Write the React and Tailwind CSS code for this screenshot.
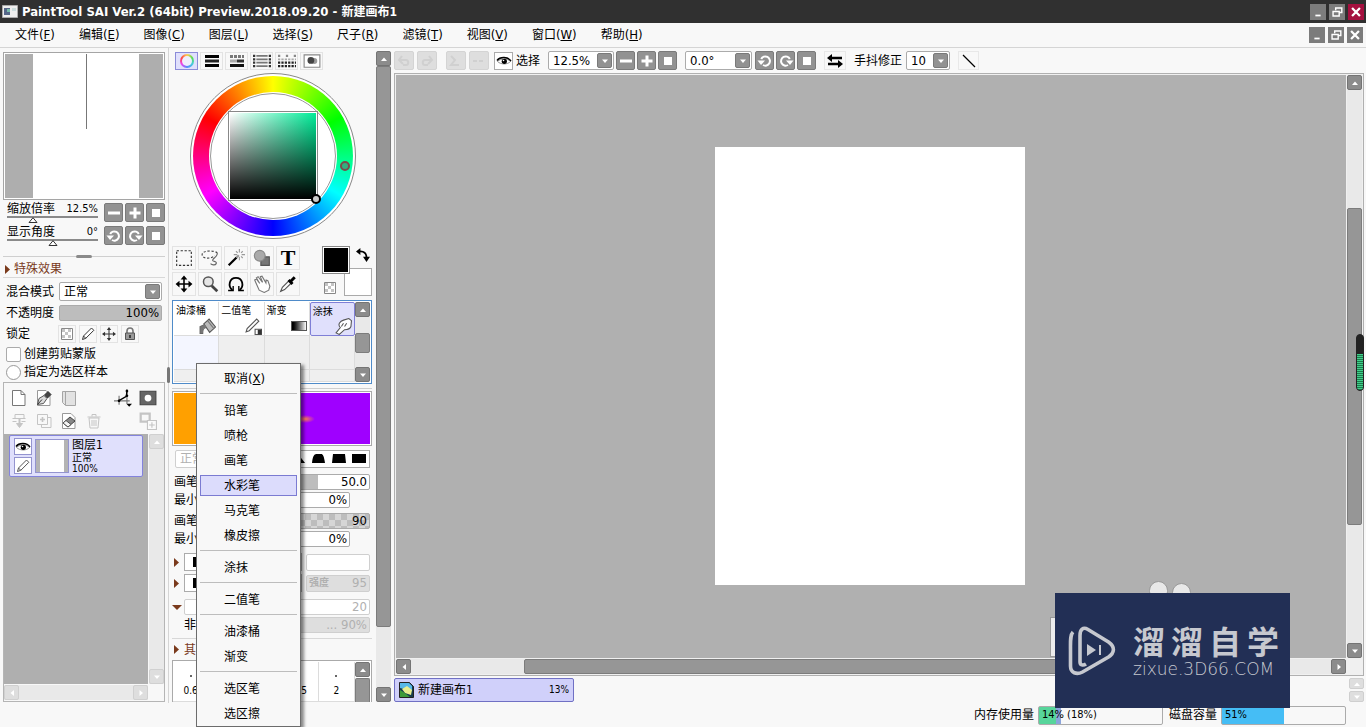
import { useState } from "react";
import clsx from "clsx";

const menus = [
  ["文件", "F"], ["编辑", "E"], ["图像", "C"], ["图层", "L"], ["选择", "S"],
  ["尺子", "R"], ["滤镜", "T"], ["视图", "V"], ["窗口", "W"], ["帮助", "H"],
];

const toolMenu = [
  ["取消"],
  ["铅笔", "喷枪", "画笔", "水彩笔", "马克笔", "橡皮擦"],
  ["涂抹"],
  ["二值笔"],
  ["油漆桶", "渐变"],
  ["选区笔", "选区擦"],
];

/* ---------- icons ---------- */

function Svg({ size = 16, children, className }) {
  return (
    <svg
      width={size}
      height={size}
      viewBox="0 0 16 16"
      fill="none"
      stroke="currentColor"
      strokeWidth="1"
      className={clsx("shrink-0", className)}
      aria-hidden="true"
    >
      {children}
    </svg>
  );
}

const Minus = () => <Svg><path d="M2 8h12" strokeWidth="3" /></Svg>;
const Plus = () => <Svg><path d="M2.500 8h11M8 2.500v11" strokeWidth="3" /></Svg>;
const Stop = () => <Svg><path d="M4 4h8v8h-8z" fill="currentColor" stroke="none" /></Svg>;
const RotateLeft = () => (
  <Svg>
    <path d="M4.200 6A4.600 4.600 0 1 1 6 12" strokeWidth="2" />
    <path d="M0.500 7.500h7.500L4 12z" fill="currentColor" stroke="none" />
  </Svg>
);
const RotateRight = () => <span className="-scale-x-100"><RotateLeft /></span>;
const Eye = () => (
  <Svg>
    <path d="M1.500 8.500C4 5.500 11.500 5 14.500 8.500 11.500 11.800 5 11.800 1.500 8.500z" fill="#fff" stroke="#777" strokeWidth="0.800" />
    <path d="M1 7.500C4 3.500 12 3.500 15 8" strokeWidth="1.400" />
    <circle cx="8.300" cy="8.300" r="2.600" fill="currentColor" stroke="none" />
    <circle cx="7.500" cy="7.500" r="0.800" fill="#fff" stroke="none" />
  </Svg>
);
const Pencil = () => (
  <Svg>
    <path d="M2.500 13.500l1-3.500 8-8 2.300 2.300-8 8zM3.500 10l2.300 2.300" fill="#fff" />
  </Svg>
);
const Checker = () => (
  <Svg>
    <path d="M2.500 2.500h11v11h-11z" fill="#fff" stroke="#888" />
    <path d="M3 3h3v3h-3zM9 3h3v3h-3zM6 6h3v3h-3zM3 9h3v3h-3zM9 9h3v3h-3z" fill="#c4c4c4" stroke="none" />
  </Svg>
);
const Move = () => (
  <Svg size={14}>
    <path d="M8 2v12M2 8h12" strokeWidth="1.200" />
    <path d="M8 0L5.500 3.500h5zM8 16l-2.500-3.500h5zM0 8l3.500-2.500v5zM16 8l-3.500-2.500v5z" fill="currentColor" stroke="none" />
  </Svg>
);
const Lock = () => (
  <Svg>
    <path d="M5 7V5a3 3 0 0 1 6 0v2" strokeWidth="1.600" stroke="#777" />
    <path d="M3.500 7h9v6.500h-9z" fill="#999" stroke="#555" />
    <path d="M8 9v3" stroke="#222" strokeWidth="1.500" />
  </Svg>
);
const MinIcon = () => <Svg size={14}><path d="M5 12h6" strokeWidth="2" /></Svg>;
const RestoreIcon = () => (
  <Svg size={14}>
    <path d="M6.500 6V3.500h7v5H11M3.500 7.500h7v5h-7z" strokeWidth="1.600" />
  </Svg>
);
const CloseIcon = () => <Svg size={14}><path d="M3.500 3.500l9 9M12.500 3.500l-9 9" strokeWidth="2.600" /></Svg>;

function Triangle({ dir }) {
  const d = {
    up: "M1 6l3-3.500L7 6z",
    down: "M1 2.500h6L4 6z",
    left: "M6 1v6L2.500 4z",
    right: "M2.500 1v6L6 4z",
  }[dir];
  return (
    <svg width="8" height="8" viewBox="0 0 8 8" className="shrink-0" aria-hidden="true">
      <path d={d} fill="currentColor" />
    </svg>
  );
}

function Expander({ open }) {
  return (
    <svg width="11" height="9" viewBox="0 0 11 9" className="shrink-0 text-[#7a3a1c]" aria-hidden="true">
      <path d={open ? "M0 2h10L5 7z" : "M2 0v9l5-4.500z"} fill="currentColor" />
    </svg>
  );
}

/* ---------- small controls ---------- */

function WindowButton({ label, close, children }) {
  return (
    <button
      aria-label={label}
      className={clsx(
        "flex h-4 w-4 items-center justify-center text-white",
        close ? "bg-[#a5103f]" : "bg-[#7c7c7c]"
      )}
    >
      {children}
    </button>
  );
}

function DarkButton({ label, children }) {
  return (
    <button
      aria-label={label}
      className="flex h-[19px] w-[19px] items-center justify-center rounded-xs border border-[#7a7a7a] bg-[#929292] text-white"
    >
      {children}
    </button>
  );
}

function GhostButton({ label, children }) {
  return (
    <button
      aria-label={label}
      className="flex h-[19px] w-5 items-center justify-center rounded-xs border border-[#d4d4d4] bg-[#dedede] text-[#d0d0d0]"
    >
      {children}
    </button>
  );
}

function IconButton({ label, muted, children }) {
  return (
    <button
      aria-label={label}
      className={clsx("flex h-[18px] w-[18px] items-center justify-center", muted ? "text-[#c4c4c4]" : "text-[#333]")}
    >
      {children}
    </button>
  );
}

function Select({ label, value, className }) {
  return (
    <div className={clsx("relative h-[19px]", className)}>
      <select
        aria-label={label}
        defaultValue={value}
        className="h-full w-full appearance-none rounded-xs border border-[#ababab] bg-white pl-1 leading-4"
      >
        <option>{value}</option>
      </select>
      <span className="pointer-events-none absolute top-0.5 right-0.5 flex h-[15px] w-[15px] items-center justify-center rounded-xs border border-[#7a7a7a] bg-[#929292] text-white">
        <Triangle dir="down" />
      </span>
    </div>
  );
}

function ScrollButton({ dir, light }) {
  return (
    <button
      aria-label={dir}
      className={clsx(
        "flex h-[15px] w-[15px] shrink-0 items-center justify-center rounded-xs border text-white",
        light ? "border-[#d0d0d0] bg-[#dedede]" : "border-[#747474] bg-[#8c8c8c]"
      )}
    >
      <Triangle dir={dir} />
    </button>
  );
}

// before / thumb / after are relative lengths of the track
function Scrollbar({ horizontal, light, before = 0, thumb = 0, after = 0, className }) {
  return (
    <div className={clsx("flex shrink-0 bg-[#e9e9e9]", horizontal ? "h-[15px]" : "w-[15px] flex-col", className)}>
      <ScrollButton dir={horizontal ? "left" : "up"} light={light} />
      <div className={clsx("flex min-h-0 flex-1", !horizontal && "flex-col")}>
        <div style={{ flexGrow: before }} />
        {thumb > 0 && (
          <div className="rounded-xs border border-[#7c7c7c] bg-[#969696]" style={{ flexGrow: thumb }} />
        )}
        <div style={{ flexGrow: after }} />
      </div>
      <ScrollButton dir={horizontal ? "right" : "down"} light={light} />
    </div>
  );
}

function ViewSlider({ id, label, text, initial }) {
  const [value, setValue] = useState(initial);
  return (
    <div className="relative h-[21px] w-[91px]">
      <div className="flex justify-between border-b-2 border-[#8a8a8a] leading-[14px]">
        <label htmlFor={id}>{label}</label>
        <span className="text-[11px]">{text}</span>
      </div>
      <svg
        width="11"
        height="6"
        viewBox="0 0 11 6"
        className="absolute bottom-0 -translate-x-1/2"
        style={{ left: `${value}%` }}
        aria-hidden="true"
      >
        <path d="M5.500 0.700L9.500 5.500h-8z" fill="#fff" stroke="#333" />
      </svg>
      <input
        id={id}
        type="range"
        value={value}
        onChange={(e) => setValue(e.target.value)}
        className="absolute inset-0 h-full w-full opacity-0"
      />
    </div>
  );
}

/* ---------- left column ---------- */

function NavigatorPanel() {
  return (
    <>
      <div className="flex h-[148px] shrink-0 justify-center border border-[#a5a5a5] bg-white p-px">
        <div className="flex w-full justify-center bg-[#aeaeae] pl-1">
          <div className="flex w-[106px] justify-center bg-white">
            <div className="h-[75px] w-px bg-[#777]" />
          </div>
        </div>
      </div>
      <div className="mt-px flex h-[23px] shrink-0 items-center justify-between pl-1">
        <ViewSlider id="zoom" label="缩放倍率" text="12.5%" initial={29} />
        <div className="flex gap-0.5">
          <DarkButton label="缩小"><Minus /></DarkButton>
          <DarkButton label="放大"><Plus /></DarkButton>
          <DarkButton label="重置缩放"><Stop /></DarkButton>
        </div>
      </div>
      <div className="flex h-[23px] shrink-0 items-center justify-between pl-1">
        <ViewSlider id="angle" label="显示角度" text="0°" initial={50} />
        <div className="flex gap-0.5">
          <DarkButton label="向左旋转"><RotateLeft /></DarkButton>
          <DarkButton label="向右旋转"><RotateRight /></DarkButton>
          <DarkButton label="重置角度"><Stop /></DarkButton>
        </div>
      </div>
      <div className="mt-1 flex h-2.5 shrink-0 items-center">
        <div className="h-px flex-1 bg-[#cfcfcf]" />
        <div className="h-[3px] w-4 rounded-full bg-[#8a8a8a]" />
        <div className="h-px flex-1 bg-[#cfcfcf]" />
      </div>
    </>
  );
}

function LayerSettings() {
  return (
    <>
      <button className="flex h-[17px] shrink-0 items-center border-b border-[#d8d8d8] text-[#7a3a1c]">
        <Expander />
        特殊效果
      </button>
      <div className="mt-1 flex h-[19px] shrink-0 items-center justify-between px-[3px]">
        <span>混合模式</span>
        <Select label="混合模式" value="正常" className="w-[103px]" />
      </div>
      <div className="mt-1 flex h-4 shrink-0 items-center justify-between px-[3px]">
        <label htmlFor="opacity">不透明度</label>
        <input
          id="opacity"
          defaultValue="100%"
          className="h-4 w-[103px] rounded-xs border border-[#ababab] bg-[#bdbdbd] pr-0.5 text-right text-[13px]"
        />
      </div>
      <div className="mt-1 flex h-[18px] shrink-0 items-center px-[3px]">
        <span className="w-[52px]">锁定</span>
        <div className="flex gap-[3px] text-[#333]">
          {[["锁定透明", Checker], ["锁定绘画", Pencil], ["锁定移动", Move], ["全部锁定", Lock]].map(([label, Icon]) => (
            <button
              key={label}
              aria-label={label}
              className="flex h-[18px] w-[18px] items-center justify-center border border-[#e3e3e3]"
            >
              <Icon />
            </button>
          ))}
        </div>
      </div>
      <label className="mt-0.5 flex h-[18px] shrink-0 items-center gap-[3px] pl-[3px]">
        <input type="checkbox" className="h-[15px] w-[15px] appearance-none rounded-xs border border-[#ababab] bg-white" />
        创建剪贴蒙版
      </label>
      <label className="flex h-[18px] shrink-0 items-center gap-[3px] pl-[3px]">
        <input type="radio" name="sample" className="h-[15px] w-[15px] appearance-none rounded-full border border-[#999] bg-white" />
        指定为选区样本
      </label>
    </>
  );
}

const Page = ({ fill = "#fff" }) => <path d="M1.500 0.500H10l4 4v11H1.500z" fill={fill} />;

function LayerPanel() {
  return (
    <section className="mt-px flex min-h-0 flex-1 flex-col border border-[#b5b5b5]">
      <div className="shrink-0 pt-[3px] pb-0.5">
        <div className="flex h-[23px] items-center gap-[7px] pr-[7px] pl-1.5">
          <IconButton label="新建图层"><Svg className="text-[#777]"><Page /><path d="M10 0.500v4h4" /></Svg></IconButton>
          <IconButton label="新建钢笔图层">
            <Svg>
              <g stroke="#999"><Page /></g>
              <path d="M1.500 14.500l1.500-6 5-3 3 3-3.500 5z" fill="#ddd" stroke="#555" />
              <path d="M8.500 5l3.500-3.500 3 3L11.500 8z" fill="#444" />
              <path d="M1.500 14.500l4.500-5" />
            </Svg>
          </IconButton>
          <IconButton label="新建图层组">
            <Svg className="text-[#a5a5a5]"><path d="M1.500 1.500h13v14h-10l-3-3z" fill="#e2e2e2" /><path d="M4.500 15V2" /></Svg>
          </IconButton>
          <span className="flex-1" />
          <IconButton label="透视尺">
            <Svg size={18} className="text-black">
              <path d="M0 10.500h14M11.500 0v13M4.500 6v8" stroke="#777" />
              <path d="M4 10.500l7-4 .500-5" strokeWidth="1.200" />
              <circle cx="4.500" cy="10.500" r="1.200" fill="currentColor" stroke="none" />
              <circle cx="11.500" cy="6" r="1.200" fill="currentColor" stroke="none" />
              <circle cx="11.500" cy="1.800" r="1.200" fill="currentColor" stroke="none" />
              <path d="M11 13h5l-2.500 2.800z" fill="currentColor" stroke="none" />
            </Svg>
          </IconButton>
          <IconButton label="图层蒙版">
            <Svg size={18}><path d="M1 2h14v12H1z" fill="#666" stroke="#444" /><circle cx="8" cy="8" r="3" fill="#fff" stroke="none" /></Svg>
          </IconButton>
        </div>
        <div className="flex h-[23px] items-center gap-[7px] pr-[7px] pl-1.5">
          <IconButton label="向下合并" muted>
            <Svg><path d="M4 1.500h9v4H4zM1.500 5.500H6M10 5.500h4.500M1.500 8.500h4M10.500 8.500h4" /><path d="M8.500 5v6" strokeWidth="2" /><path d="M5.500 10.500h6l-3 4z" fill="currentColor" /></Svg>
          </IconButton>
          <IconButton label="复制图层" muted>
            <Svg><path d="M1.500 1.500h10v10h-10zM12 4.500h3v10H5.500V12" /><path d="M4 6.500h5M6.500 4v5" strokeWidth="1.600" /></Svg>
          </IconButton>
          <IconButton label="清除图层">
            <Svg><g stroke="#999"><Page /></g><path d="M2 10l7-6 5 4-7 6z" fill="#888" stroke="#444" /><path d="M2 10l3-2.500 5 4L7 14z" fill="#f4f4f4" stroke="#555" /></Svg>
          </IconButton>
          <IconButton label="删除图层" muted>
            <Svg><path d="M3 5l1 10h8l1-10zM1.500 4h13M6 3.500v-2h4v2M6 7v6M8 7v6M10 7v6" /></Svg>
          </IconButton>
          <span className="flex-1" />
          <IconButton label="合并蒙版" muted>
            <Svg size={18}><path d="M1.500 1.500h8v7h-8z" strokeWidth="2" /><path d="M7.500 7.500h8v8h-8z" fill="#fafafa" /><path d="M9 11.500h5M11.500 9v5" /></Svg>
          </IconButton>
        </div>
      </div>
      <div className="flex min-h-0 flex-1">
        <div className="mr-px flex-1 bg-[#afafaf]">
          <div className="mt-px mr-[5px] ml-[5px] flex h-[42px] items-center gap-[3px] rounded-xs border border-[#8383dc] bg-[#e0e0fc] pl-1">
            <div className="flex flex-col gap-0.5">
              <button aria-label="显示图层" className="flex h-[17px] w-[18px] items-center justify-center border border-[#9494cf] bg-white"><Eye /></button>
              <button aria-label="编辑图层" className="flex h-[17px] w-[18px] items-center justify-center border border-[#9494cf] bg-white text-[#555]"><Pencil /></button>
            </div>
            <div className="flex h-[34px] w-[34px] justify-center border border-[#9494cf] bg-[#b4b4b4]">
              <div className="w-6 bg-white" />
            </div>
            <div className="flex flex-col text-[10px] leading-[11px]">
              <span className="text-xs leading-[14px]">图层1</span>
              <span>正常</span>
              <span>100%</span>
            </div>
          </div>
        </div>
        <Scrollbar light />
      </div>
      <div className="flex h-[17px] shrink-0 pt-px">
        <Scrollbar horizontal light className="flex-1" />
        <div className="w-4" />
      </div>
    </section>
  );
}

/* ---------- colour + tools column ---------- */

function ColorTabs() {
  const lines = (y) => `M1 ${y}h14`;
  return (
    <div className="flex h-[18px] shrink-0 gap-0.5 pl-[3px]">
      <button aria-label="色轮" className="flex w-[23px] items-center justify-center border border-[#8b8bd8] bg-[#e0e0fc]">
        <span className="flex h-3.5 w-3.5 items-center justify-center rounded-full bg-[conic-gradient(#fc5,#5d5,#4cd,#58f,#e4e,#f44,#fc5)]">
          <span className="h-2.5 w-2.5 rounded-full bg-[#eeeefc]" />
        </span>
      </button>
      <button aria-label="RGB滑块" className="flex w-[23px] items-center justify-center border border-[#e3e3e3] text-black">
        <Svg><path d={lines(3.5)} strokeWidth="3" /><path d={lines(8)} strokeWidth="3" stroke="#222" /><path d={lines(12.5)} strokeWidth="3" /></Svg>
      </button>
      <button aria-label="HSV滑块" className="flex w-[23px] items-center justify-center border border-[#e3e3e3]">
        <Svg>
          <path d="M1 3.500h14" strokeWidth="3" stroke="#777" strokeDasharray="3 1" />
          <path d="M1 8h7" strokeWidth="3" stroke="#aaa" /><path d="M8 8h7" strokeWidth="3" stroke="#333" />
          <path d={lines(12.5)} strokeWidth="3" stroke="#111" />
        </Svg>
      </button>
      <button aria-label="中间色" className="flex w-[23px] items-center justify-center border border-[#e3e3e3] text-[#333]">
        <Svg size={18}>
          <path d="M3 3.500h10M3 6.500h10M3 9.500h10M3 12.500h10" strokeWidth="1.500" stroke="#777" />
          <path d="M0 3.500h2M0 6.500h2M0 9.500h2M0 12.500h2M14 3.500h2M14 6.500h2M14 9.500h2M14 12.500h2" strokeWidth="2" />
        </Svg>
      </button>
      <button aria-label="色板" className="flex w-[23px] items-center justify-center border border-[#e3e3e3] text-[#222]">
        <Svg size={18}>
          <path d="M0 3.500h16" strokeDasharray="2 5" strokeWidth="2" stroke="#888" />
          <path d="M0 6.500h16" strokeDasharray="2 1" strokeWidth="1.500" stroke="#aaa" />
          <path d="M0 9.500h16M0 12.500h16" strokeDasharray="2 1" strokeWidth="2" />
        </Svg>
      </button>
      <button aria-label="调色盘" className="flex w-[23px] items-center justify-center border border-[#e3e3e3]">
        <Svg size={18}>
          <path d="M1 2.500h14v11H1z" fill="#fff" stroke="#888" />
          <circle cx="10" cy="8" r="2.700" fill="#999" stroke="none" /><circle cx="7" cy="7.500" r="3" fill="#444" stroke="none" />
        </Svg>
      </button>
    </div>
  );
}

function ColorWheel() {
  return (
    <div className="relative mt-[3px] ml-0.5 flex h-[166px] w-[166px] shrink-0 items-center justify-center self-center rounded-full border border-[#888] bg-white">
      <div className="flex h-40 w-40 items-center justify-center rounded-full bg-[conic-gradient(#ff0,#0f0,#0ff,#00f,#f0f,#f00,#ff0)]">
        <div className="flex h-32 w-32 items-center justify-center rounded-full bg-white">
          <div className="flex h-[126px] w-[126px] items-center justify-center rounded-full border border-[#999]">
            <div className="h-[90px] w-[90px] border border-[#888] bg-white p-px">
              <div className="h-full w-full bg-[linear-gradient(to_top,#000,transparent),linear-gradient(to_right,#fff,#00ec98)]" />
            </div>
          </div>
        </div>
      </div>
      <span className="absolute top-[87px] left-[149px] h-2.5 w-2.5 rounded-full border-2 border-[#7a4a4a] bg-[#30b080]" />
      <span className="absolute top-[120px] left-[120px] h-2.5 w-2.5 rounded-full border-2 border-black bg-[#ccc]" />
    </div>
  );
}

const tools = [
  ["矩形选区", <path d="M1.500 1.500h13v13h-13z" strokeDasharray="2 1.500" stroke="#333" />],
  ["套索", <><path d="M14.500 3.500C12 1 1 1 1 5s8 4 11 1" strokeDasharray="2 1.500" stroke="#444" /><path d="M14.500 3.500c0 4-3 4-4 6s4 1 3 3.500c-1 2-4 1-5 0" stroke="#666" /></>],
  ["魔棒", <><path d="M1.500 14.500l7-7" strokeWidth="2" /><path d="M8.500 7.500l2-2" stroke="#999" strokeWidth="2" /><path d="M11 0v3M11 7v3M6 5h3M13 5h3M8 2l1.500 1.500M14 2l-1.500 1.500M14 8l-1.500-1.500" stroke="#999" /></>],
  ["形状", <><path d="M7 7h7.500v7.500H7z" fill="#777" stroke="#555" /><circle cx="6" cy="6" r="4.800" fill="#aaa" stroke="#888" /></>],
  ["文字", null],
  ["移动", <><path d="M8 2v12M2 8h12" strokeWidth="1.400" /><path d="M8 0.500L5 4h6zM8 15.500L5 12h6zM0.500 8L4 5v6zM15.500 8L12 5v6z" fill="currentColor" stroke="none" /></>],
  ["缩放", <><path d="M9.500 9.500l5 5" strokeWidth="2.400" stroke="#444" /><circle cx="6.500" cy="6" r="4.300" fill="#e5e5e5" stroke="#555" strokeWidth="1.300" /></>],
  ["旋转", <><path d="M4.800 13.300C0.500 10 2 2.500 8 2.500s7.500 7.500 3.200 10.800" strokeWidth="1.600" /><path d="M1 13.800h4.500V9.800M15 13.800h-4.500V9.800" strokeWidth="1.200" /></>],
  ["抓手", <path d="M1.500 4.500l1.500-1 3 4-3-5 1.500-1 4 5-2-5 1.500-.500 3.500 6 .200-2.500 1.500.500 1.800 5-1 3.500-4 2-4.500-2z" fill="#fff" stroke="#777" />],
  ["吸管", <><path d="M1.500 14.500l1.500-3.500 6-6 2 2-6 6z" fill="#fff" stroke="#555" /><path d="M8.500 4.500l3.500 3.500M10 6l4-4" strokeWidth="2.600" /></>],
];

function ToolGrid() {
  return (
    <div className="mt-[7px] flex h-[50px] shrink-0 justify-between">
      <div className="grid grid-cols-5 gap-0.5">
        {tools.map(([label, art]) => (
          <button
            key={label}
            aria-label={label}
            className="flex h-6 w-6 items-center justify-center border border-[#e3e3e3] text-black"
          >
            {art ? (
              <Svg size={18}>{art}</Svg>
            ) : (
              <span className="font-['Liberation_Serif',serif] text-[22px] leading-6 font-bold">T</span>
            )}
          </button>
        ))}
      </div>
      <div className="relative w-[50px]">
        <button aria-label="背景色" className="absolute right-0 bottom-0 h-7 w-7 border border-[#aaa] bg-white" />
        <button aria-label="前景色" className="absolute top-0 left-0 h-7 w-7 border border-[#888] bg-black shadow-[inset_0_0_0_1px_#fff]" />
        <button aria-label="交换颜色" className="absolute top-0.5 right-0.5 text-black">
          <Svg size={14}>
            <path d="M4 4c5-.500 8 2 8 7" strokeWidth="2" />
            <path d="M5 0v8L0 4zM8 10h8l-4 6z" fill="currentColor" stroke="none" />
          </Svg>
        </button>
        <button aria-label="透明色" className="absolute bottom-0 left-0"><Checker /></button>
      </div>
    </div>
  );
}

const brushes = [
  ["油漆桶", <><path d="M4.500 5.500l5-4.500 6 7.500-5.500 5z" fill="#bbb" stroke="#555" /><path d="M8 2.500l6 7.500" stroke="#777" /><path d="M5.500 6L1 8v6.500h2.500C3.500 11 4 9.500 7 9" fill="#777" stroke="#666" /></>],
  ["二值笔", <><path d="M1 13l1-3 9-9 2 2-9 9z" fill="#fff" stroke="#555" /><path d="M9.500 10.500h6v5h-6z" fill="#fff" stroke="#555" /><path d="M12 11h3.500v4.500H12z" fill="#333" stroke="none" /></>],
  ["渐变", null],
  ["涂抹", <path d="M1 14l4-5C2 6 5 3 8 2l5-1.500 2.500 2L15 8c-1 3-4 3-6 3l-5 4.500zM8 5L6 8M11 5L9 8" fill="#fff" stroke="#555" />],
];

function BrushPanel() {
  return (
    <div className="mt-1 flex h-[84px] shrink-0 border border-[#4f8bc9] bg-white p-px">
      <div className="grid flex-1 grid-cols-4 grid-rows-[34px_34px_1fr]">
        {brushes.map(([name, art], i) => (
          <button
            key={name}
            className={clsx(
              "flex flex-col justify-between px-0.5 pt-[3px] text-left text-[10px] leading-3",
              i === 3 ? "rounded-xs border border-[#7f7fd6] bg-[#e0e0fc]" : "border-r border-b border-[#dcdcdc]"
            )}
          >
            {name}
            <span className="self-end">
              {art ? (
                <Svg size={17}>{art}</Svg>
              ) : (
                <span className="mb-1 block h-2.5 w-4 border border-[#555] bg-linear-to-r from-black to-white" />
              )}
            </span>
          </button>
        ))}
        {Array.from({ length: 8 }, (_, i) => (
          <div key={i} className={clsx("border-r border-b border-[#dcdcdc]", i === 0 ? "bg-[#f4f6ff]" : "bg-[#efefef]")} />
        ))}
      </div>
      <Scrollbar before={16} thumb={19} after={14} />
    </div>
  );
}

function ValueRow({ label, value, fill, narrow, className }) {
  return (
    <label className={clsx("flex h-4 shrink-0 items-center justify-between pl-0.5", narrow ? "pr-[22px]" : "pr-0.5", className)}>
      {label}
      <input
        defaultValue={value}
        className={clsx(
          "h-4 rounded-xs border border-[#ababab] pr-0.5 text-right text-[13px]",
          narrow ? "w-[76px]" : "w-24",
          fill || "bg-white"
        )}
      />
    </label>
  );
}

const disabledInput = "h-4 rounded-xs border border-[#cfcfcf] pr-0.5 text-right text-[13px] text-[#b0b0b0]";

function BrushSettings() {
  return (
    <>
      <div className="mt-1 shrink-0 border-t border-[#cfcfcf] pt-0.5">
        <div className="flex h-[55px] items-center justify-end border border-[#aaa] bg-[linear-gradient(to_right,#ffa000_25%,#9f00ff_60%)] shadow-[inset_0_0_0_1px_#fff]">
          <span className="mr-14 h-2 w-5 bg-radial from-[#ff8050] to-transparent to-70%" />
        </div>
      </div>
      <div className="mt-1 flex h-[18px] shrink-0 items-center justify-between gap-1 pr-0.5 pl-[3px]">
        <select aria-label="笔刷模式" disabled defaultValue="正常" className="h-[18px] w-[70px] appearance-none rounded-xs border border-[#cfcfcf] bg-white pl-1 text-[#b0b0b0]">
          <option>正常</option>
        </select>
        <button aria-label="笔刷边缘" className="flex h-[18px] items-center border border-[#ababab] bg-white">
          <svg width="80" height="14" viewBox="0 0 80 14" aria-hidden="true">
            <path d="M2 11L9 2l7 9zM23 11c1-9 3-9 5-9h4c2 0 3 2 4 9zM43 11l1-9h12l1 9zM63 2h14v9H63z" fill="#000" />
          </svg>
        </button>
      </div>
      <ValueRow className="mt-1.5" label="画笔大小" value="50.0" fill="bg-[linear-gradient(to_right,#bdbdbd_46%,#fff_46%)]" />
      <ValueRow className="mt-0.5" label="最小大小" value="0%" narrow />
      <ValueRow className="mt-[5px]" label="画笔浓度" value="90" fill="bg-[#d4d4d4] bg-[repeating-conic-gradient(#bdbdbd_0_25%,#d6d6d6_0_50%)] bg-size-[12px_12px]" />
      <ValueRow className="mt-0.5" label="最小浓度" value="0%" narrow />
      <div className="mt-1.5 flex h-[18px] shrink-0 items-center justify-between pr-0.5">
        <Expander />
        <button aria-label="笔刷形状" className="mr-1 ml-px h-[18px] flex-1 border border-[#ababab] bg-white pl-2"><span className="block h-2.5 w-10 bg-black" /></button>
        <input aria-label="形状强度" className="h-[17px] w-16 rounded-xs border border-[#cfcfcf] bg-white" />
      </div>
      <div className="mt-[3px] flex h-[18px] shrink-0 items-center justify-between pr-0.5">
        <Expander />
        <button aria-label="笔刷纹理" className="mr-1 ml-px h-[18px] flex-1 border border-[#ababab] bg-white pl-2"><span className="block h-2.5 w-10 bg-black" /></button>
        <div className="flex h-[17px] w-16 items-center justify-between rounded-xs border border-[#cfcfcf] bg-[#dedede] px-0.5 text-[#b0b0b0]">
          <label htmlFor="texture" className="shrink-0 text-[10px] font-bold">强度</label>
          <input id="texture" defaultValue="95" className="w-6 text-right text-[13px]" />
        </div>
      </div>
      <div className="mt-[7px] flex h-4 shrink-0 items-center gap-px pr-0.5">
        <Expander open />
        <input aria-label="混色" defaultValue="20" className={clsx(disabledInput, "min-w-0 flex-1 bg-white")} />
      </div>
      <label className="mt-0.5 flex h-4 shrink-0 items-center justify-between gap-1 pr-0.5 pl-3">
        非线性
        <input defaultValue="... 90%" className={clsx(disabledInput, "w-24 bg-[#dedede]")} />
      </label>
      <button className="mt-[5px] flex h-[22px] shrink-0 items-center gap-px border-t border-[#d8d8d8] text-[#7a3a1c]">
        <Expander />
        其它
      </button>
      <div className="flex min-h-0 flex-1 border border-b-0 border-[#aaa] bg-white pt-px pr-px">
        <div className="grid flex-1 grid-cols-5 text-center text-[10px]">
          {["0.6", "0.8", "1", "1.5", "2"].map((size) => (
            <button key={size} className="flex flex-col items-center justify-end gap-2 border-r border-b border-[#dcdcdc] pb-1 leading-3">
              <span className="h-0.5 w-0.5 rounded-full bg-[#333]" />
              {size}
            </button>
          ))}
        </div>
        <div className="flex w-[15px] flex-col">
          <ScrollButton dir="up" />
          <div className="mt-px flex-1 rounded-t-xs border border-b-0 border-[#7c7c7c] bg-[#969696]" />
        </div>
      </div>
    </>
  );
}

/* ---------- popup ---------- */

function ToolMenu() {
  return (
    <div
      role="menu"
      className="absolute top-[363px] left-[196px] w-[105px] border border-[#6c6c6c] bg-[#f8f8f8] px-[3px] pt-0.5 shadow-[3px_2px_3px_rgba(0,0,0,0.45)]"
    >
      {toolMenu.map((group, i) => (
        <div key={i} className={clsx(i > 0 && "mt-0.5 border-t border-[#bdbdbd] pt-1")}>
          {group.map((name) => (
            <div key={name} className="flex h-[25px] items-center">
              <button
                role="menuitem"
                className={clsx(
                  "h-[21px] w-full border pl-[23px] text-left",
                  name === "水彩笔" ? "border-[#7b7bd2] bg-[#dcdcfc]" : "border-transparent"
                )}
              >
                {name}
                {name === "取消" && <span className="text-[13px]">(<u>X</u>)</span>}
              </button>
            </div>
          ))}
        </div>
      ))}
    </div>
  );
}

/* ---------- canvas area ---------- */

function Toolbar() {
  return (
    <div className="flex h-[25px] shrink-0 items-center">
      <div className="flex gap-[3px]">
        <GhostButton label="撤销"><Svg><path d="M3 7h7c3 0 3 5 0 5H7M6 3L3 7l4 4" strokeWidth="2" /></Svg></GhostButton>
        <GhostButton label="重做"><Svg><path d="M13 7H6c-3 0-3 5 0 5h3M10 3l3 4-4 4" strokeWidth="2" /></Svg></GhostButton>
      </div>
      <div className="ml-[9px] flex gap-[3px]">
        <GhostButton label="取消选择"><Svg><path d="M3 3l4 4-4 5h8" strokeWidth="2" /></Svg></GhostButton>
        <GhostButton label="反选"><Svg><path d="M2 8h12" strokeWidth="2" strokeDasharray="4 2" /></Svg></GhostButton>
      </div>
      <div className="ml-[5px] flex items-center gap-[3px]">
        <button aria-label="显示选区" className="flex h-[18px] w-[19px] items-center justify-center border border-[#ababab] bg-white"><Eye /></button>
        选择
      </div>
      <Select label="缩放" value="12.5%" className="ml-2 w-[66px] text-[13px]" />
      <div className="ml-0.5 flex gap-0.5">
        <DarkButton label="缩小视图"><Minus /></DarkButton>
        <DarkButton label="放大视图"><Plus /></DarkButton>
        <DarkButton label="重置视图"><Stop /></DarkButton>
      </div>
      <Select label="角度" value="0.0°" className="ml-2 w-[67px] text-[13px]" />
      <div className="ml-[3px] flex gap-0.5">
        <DarkButton label="左旋"><RotateLeft /></DarkButton>
        <DarkButton label="右旋"><RotateRight /></DarkButton>
        <DarkButton label="复位"><Stop /></DarkButton>
      </div>
      <button aria-label="水平翻转" className="ml-2 flex h-[19px] w-[22px] items-center justify-center border border-[#e8e8e8] text-black">
        <Svg>
          <path d="M3 5h12M1 11h12" strokeWidth="2.400" />
          <path d="M5 1v8L0 5zM11 7v8l5-4z" fill="currentColor" stroke="none" />
        </Svg>
      </button>
      <span className="ml-2">手抖修正</span>
      <Select label="手抖修正" value="10" className="ml-1 w-11 text-[13px]" />
      <button aria-label="直线" className="ml-2 flex h-[19px] w-[21px] items-center justify-center border border-[#e8e8e8] text-black">
        <Svg><path d="M2 2l12 12" strokeWidth="1.200" /></Svg>
      </button>
    </div>
  );
}

function CanvasArea() {
  return (
    <div className="flex min-h-0 flex-1 flex-col border border-[#b0b0b0] bg-[#f0f0f0] p-px">
      <div className="flex min-h-0 flex-1">
        <div className="flex flex-1 items-center justify-center bg-[#b0b0b0] pr-0.5 pb-0.5">
          <div className="h-[438px] w-[310px] bg-white" />
        </div>
        <Scrollbar before={118} thumb={315} after={118} className="ml-px" />
      </div>
      <div className="flex pt-px">
        <Scrollbar horizontal before={113} thumb={691} after={113} className="flex-1" />
        <div className="w-4" />
      </div>
    </div>
  );
}

function DocumentTabs() {
  return (
    <div className="mt-0.5 flex h-[25px] shrink-0 justify-between">
      <button className="flex h-6 w-[180px] items-center gap-1 rounded-xs border border-[#7070c4] bg-[#d0d0fa] px-1">
        <svg width="15" height="16" viewBox="0 0 15 16" aria-hidden="true">
          <path d="M0.500 0.500h10l4 4v11h-14z" fill="#163c50" stroke="#222" />
          <path d="M1 1h9l3 3v5L1 6z" fill="#58b8e8" />
          <path d="M3 7l5-3 5 4-1 5-6-2z" fill="#e8ee90" />
          <path d="M1 8l5 3 5 4H1z" fill="#3d9a3a" />
        </svg>
        <span>新建画布1</span>
        <span className="ml-auto text-[10px]">13%</span>
      </button>
      <div className="flex flex-col gap-0.5">
        {["up", "down"].map((dir) => (
          <button
            key={dir}
            aria-label={dir}
            className="flex h-[11px] w-[15px] items-center justify-center rounded-xs border border-[#cfcfcf] bg-[#dedede] text-white"
          >
            <Triangle dir={dir} />
          </button>
        ))}
      </div>
    </div>
  );
}

function StatusBar() {
  return (
    <footer className="flex h-6 shrink-0 items-center justify-end pr-5">
      <span>内存使用量</span>
      <div className="ml-1 h-[19px] w-[125px] rounded-xs border border-[#ababab] bg-[linear-gradient(to_right,#57d59b_14%,#8ba5dc_14%_18%,#f8f8f8_18%)] pl-[3px] text-[11px] leading-4">
        14% (18%)
      </div>
      <span className="ml-1.5">磁盘容量</span>
      <div className="ml-1 h-[19px] w-[125px] rounded-xs border border-[#ababab] bg-[linear-gradient(to_right,#45bdf5_50%,#f8f8f8_50%)] pl-[3px] text-[11px] leading-4">
        51%
      </div>
    </footer>
  );
}

function Watermark() {
  return (
    <div className="absolute right-[76px] bottom-[19px]">
      <div className="absolute -top-3 left-[94px] flex gap-1">
        <span className="h-5 w-[19px] rounded-full border border-[#999] bg-[#e8e8e8]" />
        <span className="mt-0.5 h-5 w-[19px] rounded-full border border-[#999] bg-[#e8e8e8]" />
      </div>
      <div className="absolute top-6 -left-[5px] h-10 w-2 border border-[#999] bg-[#ececec]" />
      <div className="relative flex h-[115px] w-[235px] items-center gap-[17px] bg-[#222f55] pl-[13px] text-[#c6c8cf]">
        <svg width="48" height="50" viewBox="0 0 48 50" fill="none" stroke="currentColor" className="shrink-0" aria-hidden="true">
          <path d="M5 6C2 9 2.500 16 2.500 24v16c0 7 6 9 12 6l26-15c6-4 7-10 0-15L20 3.500c-5-3-8 0-8 6V36c0 3 3 4 6 2" strokeWidth="3.600" />
          <path d="M19 18v12l9-6z" fill="currentColor" stroke="none" />
          <path d="M32 19v10" strokeWidth="2" />
        </svg>
        <div className="flex flex-col">
          <div className="flex gap-1.5 text-[32px] leading-9 font-bold">
            <span>溜</span><span>溜</span><span>自</span><span>学</span>
          </div>
          <div className="font-['DejaVu_Sans',sans-serif] text-[17px] leading-4 font-extralight">zixue.3D66.COM</div>
        </div>
      </div>
    </div>
  );
}

export default function App() {
  return (
    <div className="relative flex h-screen flex-col overflow-hidden bg-[#f8f8f8] font-['DejaVu_Sans_Condensed','Noto_Sans_CJK_SC',sans-serif] text-xs leading-4 text-black">
      <header className="flex h-[23px] shrink-0 items-center gap-1 bg-[#303030] px-0.5 text-white">
        <svg width="16" height="13" viewBox="0 0 16 13" aria-hidden="true">
          <path d="M0.500 0.500h15v12h-15z" fill="#eee" stroke="#aaa" />
          <path d="M2 3h6v7H2z" fill="#568" />
          <path d="M10 3h4v3h-4z" fill="#cdd" />
          <path d="M5 4h3v3H5z" fill="#7ba" />
        </svg>
        <h1 className="text-[13px] font-bold">
          PaintTool SAI Ver.2 (64bit) Preview.2018.09.20 - <span className="text-xs">新建画布1</span>
        </h1>
        <div className="ml-auto flex gap-[3px]">
          <WindowButton label="最小化"><MinIcon /></WindowButton>
          <WindowButton label="还原"><RestoreIcon /></WindowButton>
          <WindowButton label="关闭" close><CloseIcon /></WindowButton>
        </div>
      </header>

      <nav className="flex h-[25px] shrink-0 items-center justify-between border-b border-[#d5d5d5] pr-[3px] pl-[15px]">
        <div className="flex gap-6">
          {menus.map(([name, key]) => (
            <button key={key}>{name}<span className="text-[13px]">(<u>{key}</u>)</span></button>
          ))}
        </div>
        <div className="flex gap-[3px]">
          <WindowButton label="最小化画布"><MinIcon /></WindowButton>
          <WindowButton label="还原画布"><RestoreIcon /></WindowButton>
          <WindowButton label="关闭画布"><CloseIcon /></WindowButton>
        </div>
      </nav>

      <div className="flex min-h-0 flex-1">
        <aside className="relative flex w-[169px] shrink-0 flex-col border-r border-[#d5d5d5] pt-1 pr-[3px] pb-px pl-[3px]">
          <NavigatorPanel />
          <LayerSettings />
          <LayerPanel />
          <span className="absolute top-[319px] -right-0.5 h-4 w-[3px] rounded-full bg-[#777]" />
        </aside>

        <aside className="flex w-[225px] shrink-0 gap-1 pr-[3px] pl-[3px]">
          <div className="flex w-[200px] flex-col overflow-hidden pt-1 pb-px">
            <ColorTabs />
            <ColorWheel />
            <ToolGrid />
            <BrushPanel />
            <BrushSettings />
          </div>
          <Scrollbar thumb={560} after={60} className="mt-[3px] mb-px" />
        </aside>

        <main className="flex min-w-0 flex-1 flex-col pr-0.5">
          <Toolbar />
          <CanvasArea />
          <DocumentTabs />
        </main>
      </div>

      <StatusBar />

      <ToolMenu />
      <Watermark />
      <div className="absolute top-[334px] right-0.5 flex h-[57px] w-2 items-end overflow-hidden rounded-full border border-[#222] bg-[#222]">
        <span className="h-9 w-full bg-[repeating-linear-gradient(to_bottom,#3fd08a_0_1px,#1d7a4c_1px_2px)]" />
      </div>
    </div>
  );
}
